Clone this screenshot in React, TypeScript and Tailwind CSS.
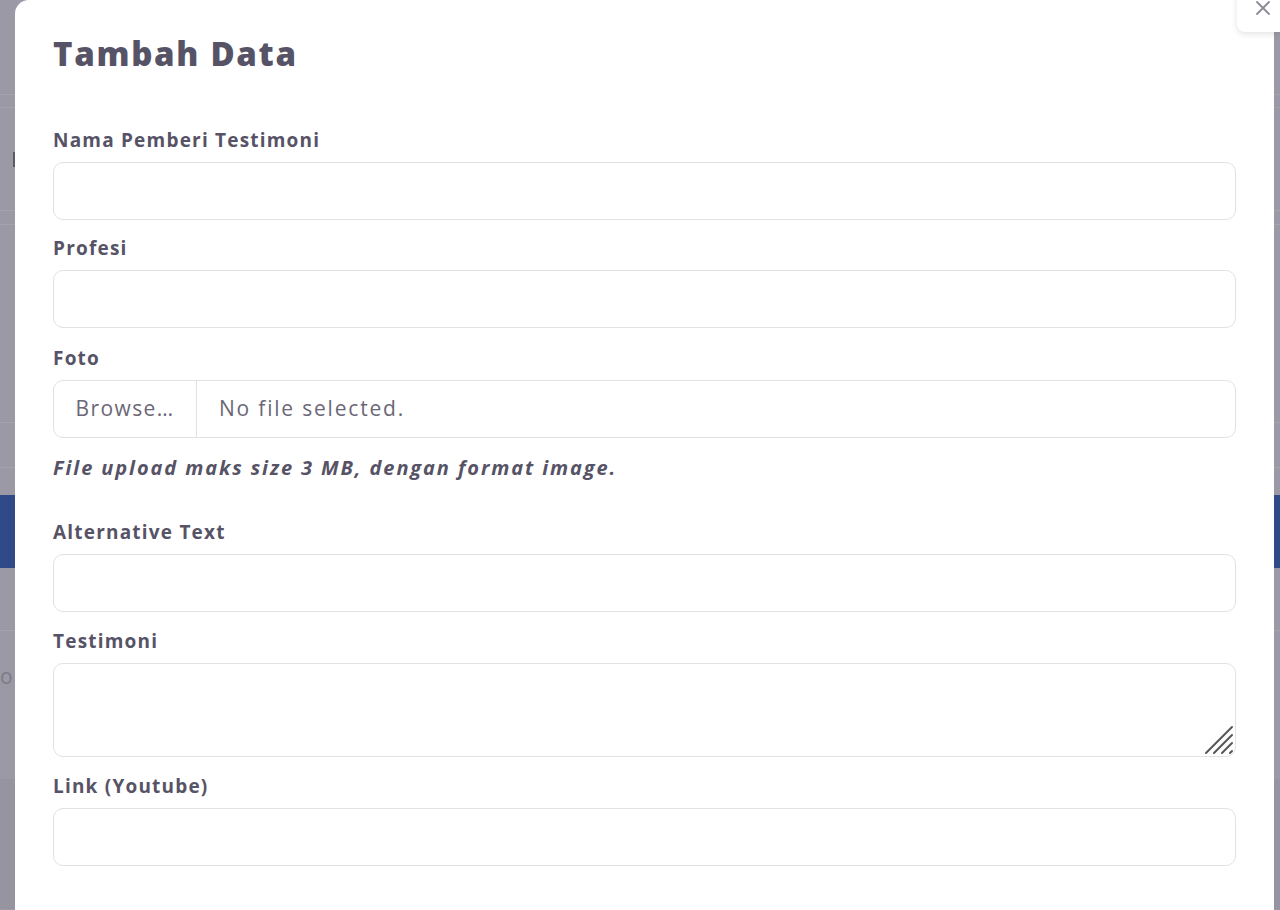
import React from "react";

const font = { fontFamily: '"Open Sans", "Noto Sans", sans-serif' };

function Label({ children }: { children: React.ReactNode }) {
  return (
    <label className="block text-[19px] leading-[27px] font-bold text-[#575366] tracking-[1.2px] mb-[8px]">
      {children}
    </label>
  );
}

function Input() {
  return (
    <input
      type="text"
      className="block w-full h-[58px] rounded-[10px] border border-[#e2e2e6] bg-white px-5 text-[18px] outline-none"
    />
  );
}

export default function App() {
  return (
    <div className="relative w-[1280px] h-[910px] overflow-hidden bg-[#9c99a6]" style={font}>
      {/* dimmed page behind */}
      <div className="flex flex-col">
        <div className="h-[95px] border-b border-[#a6a3af]" />
        <div className="h-[13px] border-b border-[#a4a1ad]" />
        <div className="h-[20px]" />
        <div className="h-[64px] pl-[13px] pt-[24px]">
          <div className="w-[2px] h-[15px] bg-[#5d5a66]" />
        </div>
        <div className="h-[19px] border-b border-[#a6a3af]" />
        <div className="h-[14px] border-b border-[#a6a3af]" />
        <div className="h-[198px] border-b border-[#a6a3af]" />
        <div className="h-[45px] border-b border-[#a6a3af]" />
        <div className="h-[27px]" />
        <div className="h-[73px] bg-[#2f4a86]" />
        <div className="h-[63px] border-b border-[#a6a3af]" />
        <div className="h-[148px] pt-[30px] text-[21px] leading-[30px] text-[#7d7a87]">o</div>
        <div className="h-[130px] bg-[#9794a2]" />
      </div>

      {/* modal */}
      <div className="absolute left-[15px] top-0 w-[1259px] h-[940px] bg-white rounded-[14px] px-[38px] pt-[30px]">
        <h2 className="text-[33px] leading-[48px] font-extrabold text-[#575366] tracking-[1.7px]">Tambah Data</h2>

        <div className="mt-[49px]">
          <Label>Nama Pemberi Testimoni</Label>
          <Input />
        </div>
        <div className="mt-[15px]">
          <Label>Profesi</Label>
          <Input />
        </div>
        <div className="mt-[17px]">
          <Label>Foto</Label>
          <div className="flex h-[58px] rounded-[10px] border border-[#e2e2e6] text-[21px] tracking-[1.4px] text-[#6b6776]">
            <div className="w-[143px] flex items-center justify-center border-r border-[#e2e2e6]">Browse…</div>
            <div className="flex items-center pl-[22px] tracking-[1.8px]">No file selected.</div>
          </div>
          <p className="mt-[16px] text-[20px] leading-[28px] font-bold italic text-[#575366] tracking-[1.9px]">
            File upload maks size 3 MB, dengan format image.
          </p>
        </div>
        <div className="mt-[37px]">
          <Label>Alternative Text</Label>
          <Input />
        </div>
        <div className="mt-[16px]">
          <Label>Testimoni</Label>
          <div className="relative">
            <textarea className="block w-full h-[94px] rounded-[10px] border border-[#e2e2e6] bg-white px-5 py-3 text-[18px] outline-none resize-none" />
            <svg className="absolute right-[2px] bottom-[2px]" width="30" height="30" viewBox="0 0 30 30">
              <g stroke="#555" strokeWidth="2" strokeLinecap="round">
                <line x1="2" y1="28" x2="28" y2="2" />
                <line x1="10" y1="28" x2="28" y2="10" />
                <line x1="18" y1="28" x2="28" y2="18" />
                <line x1="26" y1="28" x2="28" y2="26" />
              </g>
            </svg>
          </div>
        </div>
        <div className="mt-[16px]">
          <Label>Link (Youtube)</Label>
          <Input />
        </div>
      </div>

      {/* close button */}
      <div className="absolute right-0 top-[-10px] w-[43px] h-[42px] bg-white rounded-bl-[8px] rounded-tl-[8px] shadow-[0_2px_6px_rgba(0,0,0,0.12)] flex items-end justify-center pb-[16px]">
        <svg width="16" height="16" viewBox="0 0 16 16" className="ml-[8px]">
          <path d="M2 2 L14 14 M14 2 L2 14" stroke="#8c8a94" strokeWidth="1.8" strokeLinecap="round" />
        </svg>
      </div>
    </div>
  );
}
